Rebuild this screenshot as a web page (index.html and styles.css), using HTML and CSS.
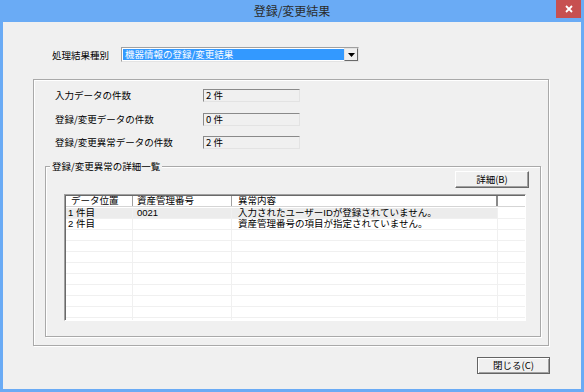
FILE: index.html
```html
<!DOCTYPE html>
<html lang="ja">
<head>
    <meta charset="UTF-8">
    <title>登録/変更結果</title>
    <link rel="stylesheet" href="styles.css">
</head>
<body>
    <div class="window">
        <div class="titlebar">
            <span></span>
            <span class="title">登録/変更結果</span>
            <span class="close-x">
                <svg width="8" height="8" viewBox="0 0 8 8"><path d="M1 1L7 7M7 1L1 7" stroke="#fff" stroke-width="1.8"/></svg>
            </span>
        </div>

        <div class="client">
            <div class="type-row">
                <span class="type-label">処理結果種別</span>
                <div class="combo">
                    <span class="combo-text">機器情報の登録/変更結果</span>
                    <span class="combo-btn">
                        <svg width="7" height="4" viewBox="0 0 7 4"><path d="M0 0H7L3.5 4Z" fill="#000"/></svg>
                    </span>
                </div>
            </div>

            <div class="group outer-group">
                <div class="counts">
                    <span class="count-label">入力データの件数</span>
                    <span class="field">2 件</span>
                    <span class="count-label">登録/変更データの件数</span>
                    <span class="field">0 件</span>
                    <span class="count-label">登録/変更異常データの件数</span>
                    <span class="field">2 件</span>
                </div>

                <div class="group detail-group">
                    <div class="group-title">登録/変更異常の詳細一覧</div>
                    <div class="detail-actions">
                        <button type="button" class="btn">詳細(B)</button>
                    </div>

                    <div class="list">
                        <div class="list-head">
                            <span class="hcell first">データ位置</span>
                            <span class="hcell">資産管理番号</span>
                            <span class="hcell">異常内容</span>
                            <span class="hcell last"></span>
                        </div>
                        <div class="list-body">
                            <div class="row selected">
                                <span class="cell first">1 件目</span>
                                <span class="cell">0021</span>
                                <span class="cell">入力されたユーザーIDが登録されていません。</span>
                                <span class="cell filler"></span>
                            </div>
                            <div class="row">
                                <span class="cell first">2 件目</span>
                                <span class="cell"></span>
                                <span class="cell">資産管理番号の項目が指定されていません。</span>
                                <span class="cell filler"></span>
                            </div>
                            <div class="row"><span class="cell"></span><span class="cell"></span><span class="cell"></span><span class="cell filler"></span></div>
                            <div class="row"><span class="cell"></span><span class="cell"></span><span class="cell"></span><span class="cell filler"></span></div>
                            <div class="row"><span class="cell"></span><span class="cell"></span><span class="cell"></span><span class="cell filler"></span></div>
                            <div class="row"><span class="cell"></span><span class="cell"></span><span class="cell"></span><span class="cell filler"></span></div>
                            <div class="row"><span class="cell"></span><span class="cell"></span><span class="cell"></span><span class="cell filler"></span></div>
                            <div class="row"><span class="cell"></span><span class="cell"></span><span class="cell"></span><span class="cell filler"></span></div>
                            <div class="row"><span class="cell"></span><span class="cell"></span><span class="cell"></span><span class="cell filler"></span></div>
                            <div class="row"><span class="cell"></span><span class="cell"></span><span class="cell"></span><span class="cell filler"></span></div>
                            <div class="row"><span class="cell"></span><span class="cell"></span><span class="cell"></span><span class="cell filler"></span></div>
                        </div>
                    </div>
                </div>
            </div>

            <div class="footer">
                <button type="button" class="btn default">閉じる(C)</button>
            </div>
        </div>
    </div>
</body>
</html>
```

FILE: styles.css
```css
* { box-sizing: border-box; }

body {
    margin: 0;
    font-family: "Noto Sans CJK JP", "Noto Sans", sans-serif;
    font-size: 9.5px;
    color: #000;
    background: #fff;
}

.window {
    width: 584px;
    height: 392px;
    background: #6aabf5;
    display: flex;
    flex-direction: column;
}

/* title bar */
.titlebar {
    height: 22px;
    display: grid;
    grid-template-columns: 1fr auto 1fr;
}

.title {
    font-size: 12px;
    line-height: 22px;
    color: #2b2b2b;
}

.close-x {
    justify-self: end;
    width: 25px;
    height: 18px;
    margin-right: 3px;
    background: #c75050;
    display: flex;
    align-items: center;
    justify-content: center;
}

/* client area */
.client {
    flex: 1;
    margin: 0 3px 3px;
    background: #f0f0f0;
    display: flex;
    flex-direction: column;
}

.type-row {
    display: flex;
    align-items: center;
    padding: 25px 0 0 49px;
}

.type-label {
    width: 69px;
    line-height: 14px;
}

.combo {
    width: 238px;
    height: 15px;
    display: flex;
    background: #fff;
    border: 1px solid;
    border-color: #a0a0a0 #e3e3e3 #e3e3e3 #a0a0a0;
}

.combo-text {
    flex: 1;
    margin: 1px 0 1px 1px;
    padding-left: 2px;
    background: #3399ff;
    color: #fff;
    line-height: 11px;
}

.combo-btn {
    width: 14px;
    background: #f0f0f0;
    border: 1px solid;
    border-color: #e3e3e3 #696969 #696969 #e3e3e3;
    display: flex;
    align-items: center;
    justify-content: center;
}

/* group boxes */
.group {
    border: 1px solid #a9a9a9;
    box-shadow: inset 1px 1px 0 #fff, 1px 1px 0 #fff;
}

.outer-group {
    margin: 17px 0 0 30px;
    width: 516px;
    height: 267px;
}

.counts {
    display: grid;
    grid-template-columns: 148px 97px;
    grid-auto-rows: 13px;
    row-gap: 10.5px;
    align-items: center;
    padding: 9px 0 0 21px;
}

.count-label {
    line-height: 13px;
}

.field {
    height: 13px;
    line-height: 11px;
    padding-left: 2px;
    border: 1px solid;
    border-color: #8a8a8a #e3e3e3 #e3e3e3 #8a8a8a;
    background: #f0f0f0;
}

.detail-group {
    margin: 17px 7px 0 11px;
    height: 171px;
}

.group-title {
    width: fit-content;
    margin: -7px 0 0 4px;
    padding: 0 2px;
    line-height: 12px;
    background: #f0f0f0;
}

.detail-actions {
    display: flex;
    justify-content: flex-end;
    margin: -1px 11px 0 0;
}

/* buttons */
.btn {
    width: 74px;
    height: 17px;
    padding: 0;
    font-family: inherit;
    font-size: 9.5px;
    line-height: 13px;
    color: #000;
    background: #f0f0f0;
    border: 1px solid;
    border-color: #fff #696969 #696969 #fff;
    box-shadow: inset -1px -1px 0 #a0a0a0;
}

.btn.default {
    width: 73px;
    border-color: #646464;
    box-shadow: inset 1px 1px 0 #fff, inset -1px -1px 0 #a0a0a0;
}

.footer {
    display: flex;
    justify-content: flex-end;
    padding: 11px 31px 0 0;
}

/* list view */
.list {
    margin: 6px 14px 0 18px;
    height: 127px;
    font-family: "Liberation Sans", "Noto Sans CJK JP", sans-serif;
    background: #fff;
    border: 1px solid;
    border-color: #a0a0a0 #fff #fff #a0a0a0;
    box-shadow: inset 1px 1px 0 #696969;
    padding: 1px 0 0 1px;
    overflow: hidden;
}

.list-head,
.row {
    display: grid;
    grid-template-columns: 67px 99px 266px 1fr;
}

.list-head {
    height: 11px;
    border-bottom: 1px solid #d5d5d5;
}

.hcell {
    padding-left: 4px;
    line-height: 10px;
    border-right: 1px solid #a0a0a0;
    white-space: nowrap;
}

.hcell.first { padding-left: 5px; }
.hcell:nth-child(3) { padding-left: 6px; border-right: 2px solid #8a8a8a; }
.hcell.last { border-right: 0; }

.list-body { padding-top: 1px; }

.row { height: 11px; }

.cell {
    padding-left: 4px;
    line-height: 10px;
    border-right: 1px solid #f0f0f0;
    border-bottom: 1px solid #f0f0f0;
    white-space: nowrap;
}

.cell.first { padding-left: 2px; }
.cell:nth-child(3) { padding-left: 6px; }
.cell.filler { border-right: 0; }

.row.selected .cell { background: #ececec; }
.row.selected .cell.filler { background: #fff; }
```
